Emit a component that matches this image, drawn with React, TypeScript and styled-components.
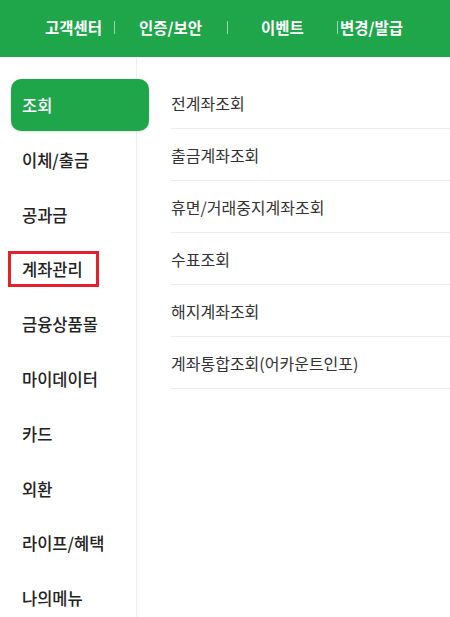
import styled, { createGlobalStyle } from "styled-components";

const GlobalStyle = createGlobalStyle`
  html, body {
    margin: 0;
    padding: 0;
    background: #ffffff;
  }
  body {
    font-family: "Noto Sans CJK KR", "Noto Sans", sans-serif;
  }
  * {
    box-sizing: border-box;
  }
`;

const topLinks = [
  { label: "고객센터", before: 45, after: 12 },
  { label: "인증/보안", before: 24, after: 25 },
  { label: "이벤트", before: 33, after: 33 },
  { label: "변경/발급", before: 2, after: 0 },
];

const categories = [
  "조회",
  "이체/출금",
  "공과금",
  "계좌관리",
  "금융상품몰",
  "마이데이터",
  "카드",
  "외환",
  "라이프/혜택",
  "나의메뉴",
];

const subMenus = [
  "전계좌조회",
  "출금계좌조회",
  "휴면/거래중지계좌조회",
  "수표조회",
  "해지계좌조회",
  "계좌통합조회(어카운트인포)",
];

const App = () => {
  return (
    <>
      <GlobalStyle />
      <Page>
        <TopBar>
          {topLinks.map((link, i) => (
            <TopItem key={link.label}>
              <TopLink $before={link.before}>{link.label}</TopLink>
              {i < topLinks.length - 1 && <Divider $after={link.after} />}
            </TopItem>
          ))}
        </TopBar>
        <Body>
          <Sidebar>
            {categories.map((name, i) => (
              <Category key={name} $active={i === 0}>
                {name === "계좌관리" ? <Marked>{name}</Marked> : name}
              </Category>
            ))}
          </Sidebar>
          <SubList>
            {subMenus.map((name) => (
              <SubRow key={name}>{name}</SubRow>
            ))}
          </SubList>
        </Body>
      </Page>
    </>
  );
};

const Page = styled.div`
  width: 450px;
  min-height: 100vh;
  display: flex;
  flex-direction: column;
  overflow: hidden;
`;

const TopBar = styled.nav`
  height: 57px;
  background: #1fa64a;
  display: flex;
  align-items: center;
  padding-bottom: 3px;
`;

const TopItem = styled.div`
  display: flex;
  align-items: center;
`;

const TopLink = styled.span<{ $before: number }>`
  margin-left: ${(p) => p.$before}px;
  color: #ffffff;
  font-size: 15.5px;
  font-weight: 700;
  white-space: nowrap;
`;

const Divider = styled.span<{ $after: number }>`
  width: 1px;
  height: 13px;
  margin-left: ${(p) => p.$after}px;
  background: rgba(255, 255, 255, 0.55);
`;

const Body = styled.div`
  flex: 1;
  display: flex;
`;

const Sidebar = styled.ul`
  width: 137px;
  flex-shrink: 0;
  margin: 0;
  padding: 22px 0 0;
  list-style: none;
  border-right: 1px solid #eeeeee;
  display: flex;
  flex-direction: column;
  gap: 2.8px;
  position: relative;
  z-index: 1;
`;

const Category = styled.li<{ $active: boolean }>`
  width: 138px;
  height: 52px;
  margin-left: 11px;
  padding-left: 11px;
  display: flex;
  align-items: center;
  border-radius: 10px;
  font-size: 16.5px;
  font-weight: 500;
  color: ${(p) => (p.$active ? "#ffffff" : "#222222")};
  background: ${(p) => (p.$active ? "#1fa64a" : "transparent")};
  box-shadow: ${(p) => (p.$active ? "0 1px 3px rgba(0, 0, 0, 0.12)" : "none")};
  white-space: nowrap;
`;

const Marked = styled.span`
  display: inline-flex;
  align-items: center;
  height: 36px;
  margin-left: -14px;
  padding: 0 13px 0 11px;
  border: 3px solid #e3202b;
`;

const SubList = styled.ul`
  flex: 1;
  margin: 0;
  padding: 20px 0 0 34px;
  list-style: none;
`;

const SubRow = styled.li`
  height: 52px;
  display: flex;
  align-items: center;
  border-bottom: 1px solid #ececec;
  font-size: 16px;
  color: #333333;
  white-space: nowrap;
`;

export default App;
